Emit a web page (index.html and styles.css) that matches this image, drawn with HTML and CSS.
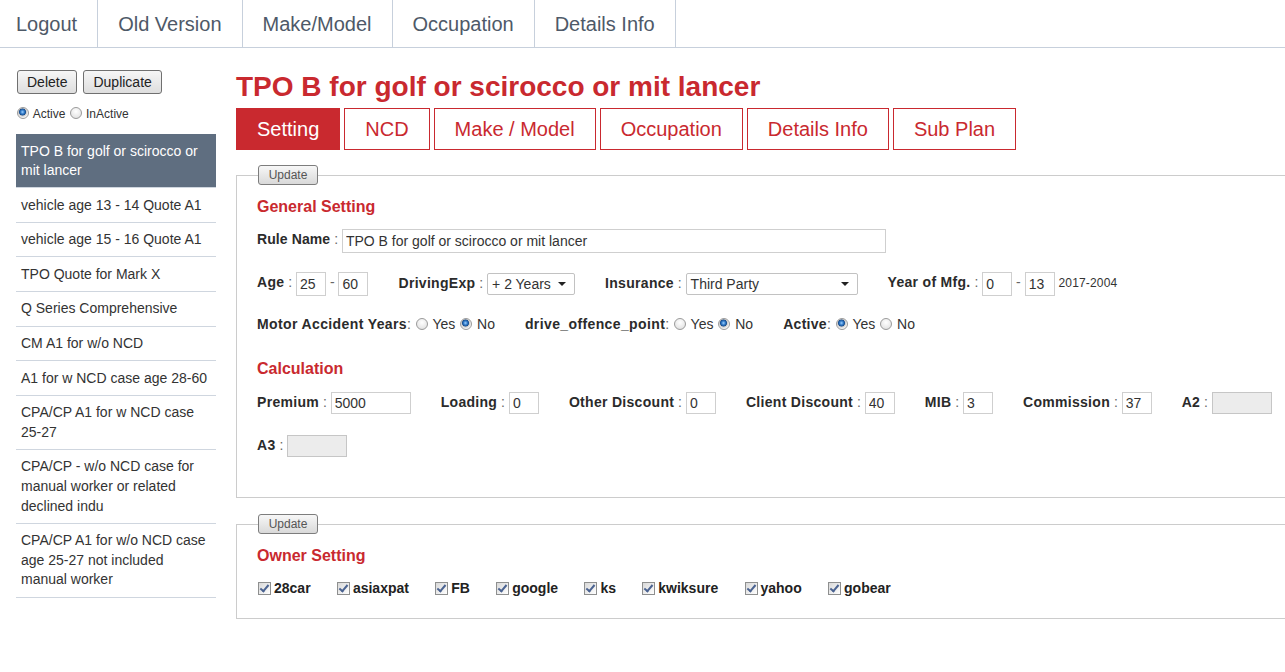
FILE: index.html
```html
<!DOCTYPE html>
<html>
<head>
<meta charset="utf-8">
<title>Rule Setting</title>
<link rel="stylesheet" href="styles.css">
</head>
<body>
<nav class="topnav">
  <a class="navitem first">Logout</a><a class="navitem">Old Version</a><a class="navitem">Make/Model</a><a class="navitem">Occupation</a><a class="navitem">Details Info</a>
</nav>
<div class="page">
  <aside class="sidebar">
    <div class="actions">
      <button class="btn">Delete</button>
      <button class="btn">Duplicate</button>
    </div>
    <div class="status">
      <label><input type="radio" name="st" class="radio" checked> Active</label>
      <label><input type="radio" name="st" class="radio"> InActive</label>
    </div>
    <ul class="rules">
      <li class="rule selected">TPO B for golf or scirocco or mit lancer</li>
      <li class="rule">vehicle age 13 - 14 Quote A1</li>
      <li class="rule">vehicle age 15 - 16 Quote A1</li>
      <li class="rule">TPO Quote for Mark X</li>
      <li class="rule">Q Series Comprehensive</li>
      <li class="rule">CM A1 for w/o NCD</li>
      <li class="rule">A1 for w NCD case age 28-60</li>
      <li class="rule">CPA/CP A1 for w NCD case 25-27</li>
      <li class="rule">CPA/CP - w/o NCD case for manual worker or related declined indu</li>
      <li class="rule">CPA/CP A1 for w/o NCD case age 25-27 not included manual worker</li>
    </ul>
  </aside>
  <main class="main">
    <h1 class="title">TPO B for golf or scirocco or mit lancer</h1>
    <div class="tabs">
      <a class="tab active">Setting</a>
      <a class="tab">NCD</a>
      <a class="tab">Make / Model</a>
      <a class="tab">Occupation</a>
      <a class="tab">Details Info</a>
      <a class="tab">Sub Plan</a>
    </div>

    <fieldset class="panel panel-general">
      <legend class="legend"><button class="btn small">Update</button></legend>
      <h3 class="heading">General Setting</h3>
      <div class="row r1">
        <div class="fld"><b class="tight">Rule Name</b><span class="sep"> : </span><input class="inp w544 tall" value="TPO B for golf or scirocco or mit lancer"></div>
      </div>
      <div class="row r2">
        <div class="fld"><b>Age</b><span class="sep"> : </span><input class="inp w30 tall" value="25"><span class="dash"> - </span><input class="inp w30 tall" value="60"></div>
        <div class="fld"><b>DrivingExp</b><span class="sep"> : </span><span class="sel w88"><span class="seltext">+ 2 Years</span><span class="arrow"></span></span></div>
        <div class="fld"><b>Insurance</b><span class="sep"> : </span><span class="sel w172"><span class="seltext">Third Party</span><span class="arrow"></span></span></div>
        <div class="fld"><b>Year of Mfg.</b><span class="sep"> : </span><input class="inp w30 tall" value="0"><span class="dash"> - </span><input class="inp w30 tall" value="13"> <span class="note">2017-2004</span></div>
      </div>
      <div class="row r3">
        <div class="fld"><b class="wide">Motor Accident Years</b><span class="sep">:</span> <input type="radio" name="ma" class="radio"> Yes <input type="radio" name="ma" class="radio" checked> No</div>
        <div class="fld"><b class="wide">drive_offence_point</b><span class="sep">:</span> <input type="radio" name="dp" class="radio"> Yes <input type="radio" name="dp" class="radio" checked> No</div>
        <div class="fld"><b>Active</b><span class="sep">:</span> <input type="radio" name="ac" class="radio" checked> Yes <input type="radio" name="ac" class="radio"> No</div>
      </div>
      <h3 class="heading calc">Calculation</h3>
      <div class="row r4">
        <div class="fld"><b>Premium</b><span class="sep"> : </span><input class="inp w80" value="5000"></div>
        <div class="fld"><b>Loading</b><span class="sep"> : </span><input class="inp w30" value="0"></div>
        <div class="fld"><b>Other Discount</b><span class="sep"> : </span><input class="inp w30" value="0"></div>
        <div class="fld"><b>Client Discount</b><span class="sep"> : </span><input class="inp w30" value="40"></div>
        <div class="fld"><b>MIB</b><span class="sep"> : </span><input class="inp w30" value="3"></div>
        <div class="fld"><b>Commission</b><span class="sep"> : </span><input class="inp w30" value="37"></div>
        <div class="fld"><b>A2</b><span class="sep"> : </span><input class="inp w60 dis" disabled></div>
      </div>
      <div class="row r5">
        <div class="fld"><b>A3</b><span class="sep"> : </span><input class="inp w60 dis" disabled></div>
      </div>
    </fieldset>

    <fieldset class="panel panel-owner">
      <legend class="legend"><button class="btn small">Update</button></legend>
      <h3 class="heading">Owner Setting</h3>
      <div class="row owners">
        <label class="own"><input type="checkbox" class="chk" checked>28car</label>
        <label class="own"><input type="checkbox" class="chk" checked>asiaxpat</label>
        <label class="own"><input type="checkbox" class="chk" checked>FB</label>
        <label class="own"><input type="checkbox" class="chk" checked>google</label>
        <label class="own"><input type="checkbox" class="chk" checked>ks</label>
        <label class="own"><input type="checkbox" class="chk" checked>kwiksure</label>
        <label class="own"><input type="checkbox" class="chk" checked>yahoo</label>
        <label class="own"><input type="checkbox" class="chk" checked>gobear</label>
      </div>
    </fieldset>
  </main>
</div>
</body>
</html>
```
FILE: styles.css
```css
html, body {
  margin: 0;
  padding: 0;
  overflow-x: hidden;
  background: #fff;
  font-family: "Liberation Sans", Arial, sans-serif;
  color: #333;
}

.topnav {
  display: flex;
  height: 47px;
  border-bottom: 1px solid #c7d0dc;
}
.navitem {
  display: block;
  padding: 0 20px;
  height: 47px;
  line-height: 49px;
  font-size: 20px;
  color: #4e5968;
  border-right: 1px solid #c7d0dc;
  white-space: nowrap;
}
.navitem.first {
  padding-left: 16px;
}

.page {
  display: flex;
  align-items: flex-start;
  padding-top: 22px;
}

.sidebar {
  width: 200px;
  margin-left: 16px;
  flex: none;
}
.actions {
  display: flex;
  gap: 6px;
  padding-left: 1px;
}
.btn {
  font-family: "Liberation Sans", Arial, sans-serif;
  font-size: 14px;
  color: #222;
  height: 24px;
  padding: 0 9px;
  border: 1px solid #707070;
  border-radius: 3px;
  background: linear-gradient(#f6f6f6, #dedede);
  cursor: pointer;
}
.btn.small {
  font-size: 12px;
  color: #555;
  height: 20px;
  width: 60px;
  padding: 0;
  border-color: #7d7d7d;
  background: linear-gradient(#f7f7f7, #d9d9d9);
}
.status {
  margin-top: 12px;
  font-size: 12px;
  line-height: 16px;
  color: #333;
}
.status .radio {
  margin: 0 1px 0 1px;
}

.rules {
  list-style: none;
  margin: 12px 0 0;
  padding: 0;
}
.rule {
  font-size: 14px;
  line-height: 19.6px;
  padding: 7.5px 5px 6.5px;
  border-bottom: 1px solid #cfd6df;
  color: #333;
}
.rule.selected {
  background: #5f6e80;
  color: #fff;
}

.main {
  flex: 1;
  margin-left: 20px;
  margin-right: -30px;
  min-width: 0;
}
.title {
  margin: 0;
  font-size: 28px;
  line-height: 34px;
  font-weight: bold;
  color: #c9292f;
  white-space: nowrap;
}
.tabs {
  display: flex;
  gap: 4px;
  margin-top: 4px;
}
.tab {
  display: block;
  height: 42px;
  box-sizing: border-box;
  padding: 0 20px;
  border: 1px solid #c9292f;
  font-size: 20px;
  line-height: 40px;
  color: #c9292f;
  white-space: nowrap;
}
.tab.active {
  background: #c9292f;
  color: #fff;
}

.panel {
  margin: 15px 0 0;
  padding: 12px 20px 40px;
  border: 1px solid #cccccc;
  min-width: 0;
}
.panel-owner {
  margin-top: 16px;
  padding-bottom: 18px;
}
.legend {
  padding: 0;
  margin-left: 1px;
  line-height: 0;
}
.heading {
  margin: 0;
  font-size: 16px;
  line-height: 20px;
  font-weight: bold;
  color: #c9292f;
}
.heading.calc {
  margin-top: 23px;
}

.row {
  display: flex;
  align-items: center;
  height: 24px;
  font-size: 14px;
  white-space: nowrap;
}
.r1 { margin-top: 11px; }
.r2 { margin-top: 19px; }
.r3 { margin-top: 17px; }
.r4 { margin-top: 11px; }
.r5 { margin-top: 19px; }
.owners { margin-top: 10px; }

.fld {
  margin-right: 30px;
  line-height: 24px;
  color: #333;
}
.fld b {
  color: #2b2b2b;
  letter-spacing: 0.3px;
}
.fld b.wide {
  letter-spacing: 0.38px;
}
.fld b.tight {
  letter-spacing: 0.1px;
}
.sep, .dash {
  color: #666;
}
.note {
  font-size: 12px;
  color: #333;
  letter-spacing: 0.15px;
}

.inp {
  box-sizing: border-box;
  height: 22px;
  border: 1px solid #cfcfcf;
  padding: 0 3px;
  font-family: "Liberation Sans", Arial, sans-serif;
  font-size: 14px;
  color: #333;
  vertical-align: middle;
  outline: none;
}
.inp.tall { height: 24px; }
.inp.dis {
  background: #ececec;
  border-color: #c6c6c6;
}
.w30 { width: 30px; }
.w60 { width: 60px; }
.w80 { width: 80px; }
.w544 { width: 544px; }

.sel {
  display: inline-flex;
  align-items: center;
  justify-content: space-between;
  box-sizing: border-box;
  height: 22px;
  vertical-align: middle;
  border: 1px solid #c2c2c2;
  border-radius: 2px;
  padding: 0 8px 0 4px;
  background: #fff;
  line-height: 20px;
}
.w88 { width: 88px; }
.w172 { width: 172px; }
.arrow {
  width: 0;
  height: 0;
  border-left: 4px solid transparent;
  border-right: 4px solid transparent;
  border-top: 4px solid #222;
}

.radio {
  -webkit-appearance: none;
  appearance: none;
  width: 12px;
  height: 12px;
  margin: 0 1px;
  border: 1px solid #9a9a9a;
  border-radius: 50%;
  background: radial-gradient(circle at 50% 35%, #ffffff 0, #e6e6e6 70%, #d4d4d4 100%);
  vertical-align: -1px;
}
.radio:checked {
  background: radial-gradient(circle at 45% 40%, #9cd0ff 0, #2f78c6 2px, #1a4f8f 3.2px, #c8c8c8 3.8px, #eaeaea 5px, #fafafa 6px);
}

.own {
  display: inline-flex;
  align-items: center;
  margin-right: 25.3px;
  font-weight: bold;
  font-size: 14px;
  color: #222;
}
.chk {
  -webkit-appearance: none;
  appearance: none;
  position: relative;
  width: 13px;
  height: 13px;
  margin: 0 3px 0 1px;
  box-sizing: border-box;
  border: 1px solid #8e8f8f;
  background: linear-gradient(135deg, #d8d8d8, #ffffff);
}
.chk:checked::after {
  content: "";
  position: absolute;
  left: 3px;
  top: 0px;
  width: 3px;
  height: 7px;
  border-right: 2px solid #4b6391;
  border-bottom: 2px solid #4b6391;
  transform: rotate(40deg);
}
```
